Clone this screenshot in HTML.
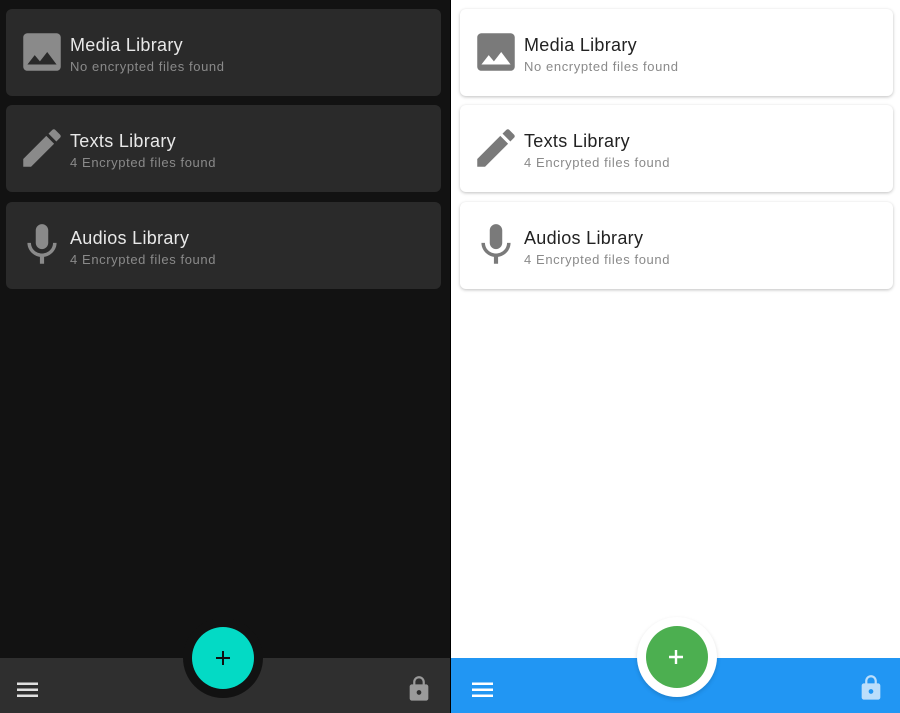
<!DOCTYPE html><html><head><style>
*{margin:0;padding:0;box-sizing:border-box}
body{width:900px;height:713px;position:relative;overflow:hidden;font-family:"Liberation Sans",sans-serif;background:#fff}
.p{position:absolute;top:0;height:713px}
.card{position:absolute;height:87px;border-radius:6px}
.d .card{background:#2a2a2a}
.l .card{background:#fff;box-shadow:0 1px 3px rgba(0,0,0,.25)}
.card svg{position:absolute;left:11px;top:18px}
.t{position:absolute;left:64px;top:26px;font-size:18px;letter-spacing:.3px}
.s{position:absolute;left:64px;top:50px;font-size:13px;letter-spacing:.6px}
.d .t{color:#e8e8e8}.d .s{color:#8a8a8a}
.l .t{color:#222}.l .s{color:#8a8a8a}
.bar{position:absolute;left:0;top:658px;width:450px;height:55px}
.notch{position:absolute;width:80px;height:80px;border-radius:50%;top:618px}
.fab{position:absolute;width:62px;height:62px;border-radius:50%;top:627px}
</style></head><body>
<div class="p d" style="left:0;width:450px;background:#121212">
 <div class="card" style="left:6px;top:9px;width:435px"><svg width="50" height="50" viewBox="0 0 24 24" fill="#8a8a8a"><path d="M21 19V5c0-1.1-.9-2-2-2H5c-1.1 0-2 .9-2 2v14c0 1.1.9 2 2 2h14c1.1 0 2-.9 2-2zM8.5 13.5l2.5 3.01L14.5 12l4.5 6H5l3.5-4.5z"/></svg><div class="t">Media Library</div><div class="s">No encrypted files found</div></div>
 <div class="card" style="left:6px;top:105px;width:435px"><svg width="50" height="50" viewBox="0 0 24 24" fill="#8a8a8a"><path d="M3 17.25V21h3.75L17.81 9.94l-3.75-3.75L3 17.25zM20.71 7.04c.39-.39.39-1.02 0-1.41l-2.34-2.34c-.39-.39-1.02-.39-1.410 0l-1.83 1.83 3.75 3.75 1.83-1.83z"/></svg><div class="t">Texts Library</div><div class="s">4 Encrypted files found</div></div>
 <div class="card" style="left:6px;top:202px;width:435px"><svg width="50" height="50" viewBox="0 0 24 24" fill="#8a8a8a"><path d="M12 14c1.66 0 2.99-1.34 2.99-3L15 5c0-1.66-1.34-3-3-3S9 3.34 9 5v6c0 1.66 1.34 3 3 3zm5.3-3c0 3-2.54 5.1-5.3 5.1S6.7 14 6.7 11H5c0 3.41 2.72 6.23 6 6.72V21h2v-3.28c3.28-.48 6-3.3 6-6.72h-1.7z"/></svg><div class="t">Audios Library</div><div class="s">4 Encrypted files found</div></div>
 <div class="bar" style="background:#2f2f2f"></div>
 <div class="notch" style="left:183px;background:#121212"></div>
 <div class="fab" style="left:192px;background:#03dac5"></div>
 <svg style="position:absolute;left:211px;top:646px" width="24" height="24" viewBox="0 0 24 24"><path d="M12 5v14M5 12h14" stroke="#111" stroke-width="2"/></svg>
 <svg style="position:absolute;left:17px;top:681px" width="22" height="16" viewBox="0 0 22 16" fill="#e0e0e0"><path d="M0 1.5h21v2.5H0zM0 7.5h21v2.5H0zM0 13.5h21v2.5H0z"/></svg>
 <svg style="position:absolute;left:405px;top:675px" width="28" height="28" viewBox="0 0 24 24" fill="#9a9a9a"><path d="M18 8h-1V6c0-2.76-2.24-5-5-5S7 3.24 7 6v2H6c-1.1 0-2 .9-2 2v10c0 1.1.9 2 2 2h12c1.1 0 2-.9 2-2V10c0-1.1-.9-2-2-2zm-6 9c-1.1 0-2-.9-2-2s.9-2 2-2 2 .9 2 2-.9 2-2 2zm3.1-9H8.9V6c0-1.71 1.39-3.1 3.1-3.1 1.71 0 3.1 1.39 3.1 3.1v2z"/></svg>
</div>
<div style="position:absolute;left:450px;top:0;width:1px;height:713px;background:#000"></div>
<div class="p l" style="left:451px;width:449px;background:#fff">
 <div class="card" style="left:9px;top:9px;width:433px"><svg width="50" height="50" viewBox="0 0 24 24" fill="#7a7a7a"><path d="M21 19V5c0-1.1-.9-2-2-2H5c-1.1 0-2 .9-2 2v14c0 1.1.9 2 2 2h14c1.1 0 2-.9 2-2zM8.5 13.5l2.5 3.01L14.5 12l4.5 6H5l3.5-4.5z"/></svg><div class="t">Media Library</div><div class="s">No encrypted files found</div></div>
 <div class="card" style="left:9px;top:105px;width:433px"><svg width="50" height="50" viewBox="0 0 24 24" fill="#7a7a7a"><path d="M3 17.25V21h3.75L17.81 9.94l-3.75-3.75L3 17.25zM20.71 7.04c.39-.39.39-1.02 0-1.41l-2.34-2.34c-.39-.39-1.02-.39-1.41 0l-1.83 1.83 3.75 3.75 1.83-1.83z"/></svg><div class="t">Texts Library</div><div class="s">4 Encrypted files found</div></div>
 <div class="card" style="left:9px;top:202px;width:433px"><svg width="50" height="50" viewBox="0 0 24 24" fill="#7a7a7a"><path d="M12 14c1.66 0 2.99-1.34 2.99-3L15 5c0-1.66-1.34-3-3-3S9 3.34 9 5v6c0 1.66 1.34 3 3 3zm5.3-3c0 3-2.54 5.1-5.3 5.1S6.7 14 6.7 11H5c0 3.41 2.72 6.23 6 6.72V21h2v-3.28c3.28-.48 6-3.3 6-6.72h-1.7z"/></svg><div class="t">Audios Library</div><div class="s">4 Encrypted files found</div></div>
 <div class="bar" style="background:#2196f3;width:449px"></div>
 <div class="notch" style="left:186px;top:617px;background:#fff;box-shadow:0 2px 4px rgba(0,0,0,.15)"></div>
 <div class="fab" style="left:195px;top:626px;background:#4caf50"></div>
 <svg style="position:absolute;left:213px;top:645px" width="24" height="24" viewBox="0 0 24 24"><path d="M12 5v14M5 12h14" stroke="#fff" stroke-width="2.4"/></svg>
 <svg style="position:absolute;left:21px;top:681px" width="22" height="16" viewBox="0 0 22 16" fill="#fff"><path d="M0 1.5h21v2.5H0zM0 7.5h21v2.5H0zM0 13.5h21v2.5H0z"/></svg>
 <svg style="position:absolute;left:406px;top:674px" width="28" height="28" viewBox="0 0 24 24" fill="#bbdefb"><path d="M18 8h-1V6c0-2.76-2.24-5-5-5S7 3.24 7 6v2H6c-1.1 0-2 .9-2 2v10c0 1.1.9 2 2 2h12c1.1 0 2-.9 2-2V10c0-1.1-.9-2-2-2zm-6 9c-1.1 0-2-.9-2-2s.9-2 2-2 2 .9 2 2-.9 2-2 2zm3.1-9H8.9V6c0-1.71 1.39-3.1 3.1-3.1 1.71 0 3.1 1.39 3.1 3.1v2z"/></svg>
</div>
</body></html>
